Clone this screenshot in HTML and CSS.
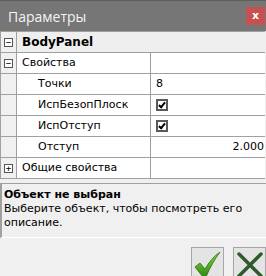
FILE: index.html
```html
<!DOCTYPE html>
<html lang="ru">
<head>
  <meta charset="utf-8">
  <title>Параметры</title>
  <link rel="stylesheet" href="styles.css">
</head>
<body>

  <div class="window">
    <div class="titlebar">
      <span class="title">Параметры</span>
      <span class="close">x</span>
    </div>

    <div class="grid">
      <div class="row top">
        <div class="gutter"><span class="toggle">&minus;</span></div>
        <div class="name bold">BodyPanel</div>
      </div>
      <div class="row">
        <div class="gutter"><span class="toggle">&minus;</span></div>
        <div class="name">Свойства</div>
        <div class="value"></div>
      </div>
      <div class="row">
        <div class="gutter"></div>
        <div class="name sub">Точки</div>
        <div class="value">8</div>
      </div>
      <div class="row">
        <div class="gutter"></div>
        <div class="name sub">ИспБезопПлоск</div>
        <div class="value"><span class="check"></span></div>
      </div>
      <div class="row">
        <div class="gutter"></div>
        <div class="name sub">ИспОтступ</div>
        <div class="value"><span class="check"></span></div>
      </div>
      <div class="row">
        <div class="gutter"></div>
        <div class="name sub">Отступ</div>
        <div class="value num">2.000</div>
      </div>
      <div class="row">
        <div class="gutter"><span class="toggle">+</span></div>
        <div class="name">Общие свойства</div>
        <div class="value"></div>
      </div>
    </div>

    <div class="desc">
      <div class="desc-title">Объект не выбран</div>
      <div class="desc-text">Выберите объект, чтобы посмотреть его описание.</div>
    </div>

    <div class="actions">
      <button class="btn">
        <svg width="28" height="26" viewBox="0 0 28 26">
          <defs>
            <linearGradient id="ok" x1="0" y1="0" x2="0" y2="1">
              <stop offset="0" stop-color="#8fd43a"/>
              <stop offset="1" stop-color="#2e8a12"/>
            </linearGradient>
          </defs>
          <path d="M1 15 L6 11 L11 17 C15 10 20 4 26 0 C21 7 16 15 12 25 L9 25 Z" fill="url(#ok)" stroke="#2a6e10" stroke-width="0.8"/>
        </svg>
      </button>
      <button class="btn">
        <svg width="28" height="28" viewBox="0 0 28 28">
          <path d="M3 3 L25 25 M25 3 L3 25" stroke="#2f5a2b" stroke-width="3.5" stroke-linecap="round"/>
        </svg>
      </button>
    </div>
  </div>

</body>
</html>
```

FILE: styles.css
```css
body {
  margin: 0;
  padding: 0;
  font-family: "DejaVu Sans", Tahoma, sans-serif;
  font-size: 11px;
  color: #000;
  background-color: #f0f0f0;
}

.window {
  width: 266px;
  height: 276px;
  overflow: hidden;
  background-color: #f0f0f0;
}

.titlebar {
  height: 30px;
  border-top: 1px solid #5e5e5e;
  background-color: #767676;
  display: flex;
  justify-content: space-between;
  align-items: center;
  padding-left: 8px;
  padding-right: 1px;
}

.title {
  color: #f4f4f4;
  font-family: "Open Sans", sans-serif;
  font-size: 14px;
}

.close {
  width: 19px;
  height: 18px;
  background-color: #c75050;
  color: #fff;
  font-weight: bold;
  font-size: 11px;
  line-height: 17px;
  text-align: center;
}

.grid {
  border-top: 1px solid #a0a0a0;
  border-left: 1px solid #a0a0a0;
  margin-right: 1px;
  background-color: #fff;
}

.row {
  display: flex;
  height: 20px;
  border-bottom: 1px solid #a0a0a0;
}

.row.top {
  background-color: #efefef;
}

.gutter {
  width: 15px;
  flex: none;
  background-color: #f0f0f0;
  border-right: 1px solid #a0a0a0;
  display: flex;
  align-items: center;
  justify-content: center;
}

.toggle {
  width: 7px;
  height: 7px;
  border: 1px solid #555;
  background-color: #fff;
  font-size: 9px;
  line-height: 7px;
  text-align: center;
  font-family: "DejaVu Sans Mono", monospace;
}

.name {
  width: 128px;
  flex: none;
  padding-left: 5px;
  line-height: 20px;
  white-space: nowrap;
}

.name.bold {
  font-weight: bold;
  font-size: 12px;
}

.name.sub {
  padding-left: 21px;
  width: 112px;
}

.value {
  flex: 1;
  border-left: 1px solid #a0a0a0;
  padding-left: 5px;
  padding-right: 1px;
  line-height: 20px;
  display: flex;
  align-items: center;
}

.value.num {
  justify-content: flex-end;
}

.check {
  width: 8px;
  height: 8px;
  border: 2px solid #595959;
  background-color: #fff;
  position: relative;
}

.check::after {
  content: "";
  position: absolute;
  left: 2px;
  top: 0px;
  width: 2px;
  height: 5px;
  border-right: 2px solid #000;
  border-bottom: 2px solid #000;
  transform: rotate(40deg);
}

.desc {
  margin-top: 4px;
  height: 49px;
  border-top: 1px solid #a0a0a0;
  border-left: 2px solid #a0a0a0;
  border-bottom: 1px solid #fff;
  padding: 4px 4px 0 2px;
  line-height: 14px;
}

.desc-title {
  font-weight: bold;
}

.actions {
  display: flex;
  justify-content: flex-end;
  gap: 9px;
  padding-top: 9px;
}

.btn {
  width: 33px;
  height: 36px;
  padding: 0;
  border: 1px solid #a6a6a6;
  background-color: #e4e4e4;
  display: flex;
  align-items: center;
  justify-content: center;
}
```
